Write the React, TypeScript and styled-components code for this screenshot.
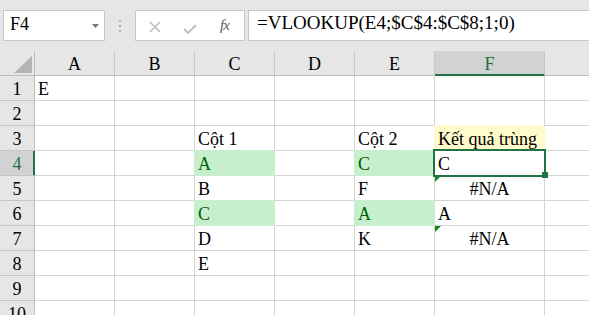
import React from 'react';
import styled, { createGlobalStyle, css } from 'styled-components';

const GREEN = '#217346';
const GOOD_FILL = '#c6efce';
const GOOD_INK = '#006100';
const NOTE_FILL = '#fffbcc';
const SERIF = "'Liberation Serif', 'Times New Roman', serif";

const GlobalStyle = createGlobalStyle`
  html, body {
    margin: 0;
    padding: 0;
    background: #fff;
    overflow: hidden;
  }
  body {
    font-family: ${SERIF};
    color: #000;
  }
`;

const Page = styled.div`
  width: 589px;
  height: 315px;
  overflow: hidden;
  font-family: ${SERIF};
`;

const Toolbar = styled.div`
  height: 51px;
  box-sizing: border-box;
  padding: 10px 0 0 3px;
  background: #e6e6e6;
  display: flex;
  align-items: flex-start;
`;

const NameBox = styled.div`
  width: 102px;
  height: 31px;
  flex-shrink: 0;
  box-sizing: border-box;
  border: 1px solid #c6c6c6;
  background: #fff;
  display: flex;
  justify-content: space-between;
  padding: 0 5px 0 6px;
  font-family: ${SERIF};
  font-size: 18px;
  line-height: 26px;

  & svg {
    align-self: center;
  }
`;

const Grip = styled.div`
  width: 30px;
  height: 31px;
  flex-shrink: 0;
  display: flex;
  flex-direction: column;
  align-items: center;
  justify-content: center;
  gap: 3px;

  & span {
    width: 2px;
    height: 2px;
    background: #b3b3b3;
  }
`;

const FxBox = styled.div`
  width: 110px;
  height: 31px;
  flex-shrink: 0;
  box-sizing: border-box;
  border: 1px solid #c6c6c6;
  background: #fff;
  display: flex;
  align-items: flex-start;
  padding-left: 13px;
`;

const ToolIcon = styled.svg<{ $left: number; $top: number }>`
  margin-left: ${(p) => p.$left}px;
  margin-top: ${(p) => p.$top}px;
  flex-shrink: 0;
`;

const FxLabel = styled.span`
  margin-left: 23px;
  margin-top: 7px;
  font-size: 15px;
  line-height: 15px;
  font-style: italic;
  color: #595959;
  letter-spacing: -1px;
`;

const FormulaBar = styled.div`
  width: 360px;
  height: 31px;
  flex-shrink: 0;
  margin-left: 3px;
  box-sizing: border-box;
  border: 1px solid #c6c6c6;
  background: #fff;
  padding-left: 8px;
  font-size: 19px;
  line-height: 24px;
  white-space: nowrap;
`;

const Sheet = styled.div`
  position: relative;
  display: grid;
  grid-template-columns: 35px repeat(5, 80px) 110px 120px;
  grid-auto-rows: 25px;
  font-family: ${SERIF};
  font-size: 18px;
`;

const headBase = css`
  box-sizing: border-box;
  background: #e6e6e6;
  text-align: center;
  line-height: 22px;
  padding-top: 2px;
`;

const Corner = styled.div`
  ${headBase};
  border-right: 1px solid #bdbdbd;
  border-bottom: 1px solid #bdbdbd;
  display: flex;
  justify-content: flex-end;
  align-items: flex-end;
  padding: 0 2px 2px 0;
`;

const ColHead = styled.div<{ $active?: boolean }>`
  ${headBase};
  border-right: 1px solid #c6c6c6;
  border-bottom: 1px solid ${(p) => (p.$active ? GREEN : '#bdbdbd')};
  ${(p) =>
    p.$active &&
    css`
      background: #d2d2d2;
      color: ${GREEN};
      box-shadow: inset 0 -1px 0 ${GREEN};
    `}
`;

const RowHead = styled.div<{ $active?: boolean }>`
  ${headBase};
  border-right: 1px solid ${(p) => (p.$active ? GREEN : '#bdbdbd')};
  border-bottom: 1px solid #c6c6c6;
  ${(p) =>
    p.$active &&
    css`
      background: #d2d2d2;
      color: ${GREEN};
      box-shadow: inset -1px 0 0 ${GREEN};
    `}
`;

const Cell = styled.div<{ $fill?: string; $ink?: string; $center?: boolean; $flag?: boolean }>`
  position: relative;
  box-sizing: border-box;
  border-right: 1px solid #d4d4d4;
  border-bottom: 1px solid #d4d4d4;
  padding: 2px 3px 0;
  line-height: 22px;
  white-space: nowrap;
  color: ${(p) => p.$ink || '#000'};
  text-align: ${(p) => (p.$center ? 'center' : 'left')};

  ${(p) =>
    p.$fill &&
    css`
      background: ${p.$fill};
      border-color: ${p.$fill};
      box-shadow: -1px -1px 0 ${p.$fill};
    `}

  ${(p) =>
    p.$flag &&
    css`
      &::before {
        content: '';
        position: absolute;
        left: 0;
        top: 0;
        border-top: 6px solid #138a13;
        border-right: 6px solid transparent;
      }
    `}
`;

const Selection = styled.div`
  position: absolute;
  left: 433px;
  top: 98px;
  width: 113px;
  height: 28px;
  box-sizing: border-box;
  border: 2px solid ${GREEN};
  pointer-events: none;

  &::after {
    content: '';
    position: absolute;
    left: 107px;
    top: 21px;
    width: 6px;
    height: 6px;
    background: ${GREEN};
  }
`;

type CellData = { v: string; fill?: string; ink?: string; err?: boolean };

const good = { fill: GOOD_FILL, ink: GOOD_INK };

const data: Record<string, CellData> = {
  A1: { v: 'E' },
  C3: { v: 'Cột 1' },
  E3: { v: 'Cột 2' },
  F3: { v: 'Kết quả trùng', fill: NOTE_FILL },
  C4: { v: 'A', ...good },
  E4: { v: 'C', ...good },
  F4: { v: 'C' },
  C5: { v: 'B' },
  E5: { v: 'F' },
  F5: { v: '#N/A', err: true },
  C6: { v: 'C', ...good },
  E6: { v: 'A', ...good },
  F6: { v: 'A' },
  C7: { v: 'D' },
  E7: { v: 'K' },
  F7: { v: '#N/A', err: true },
  C8: { v: 'E' },
};

// G is only a sliver at the right edge, so its header letter stays out of view
const columns = ['A', 'B', 'C', 'D', 'E', 'F', ''];
const rows = [1, 2, 3, 4, 5, 6, 7, 8, 9, 10];

const ACTIVE_COL = 'F';
const ACTIVE_ROW = 4;

const App = () => {
  return (
    <Page>
      <GlobalStyle />
      <Toolbar>
        <NameBox>
          <span>F4</span>
          <svg width='7' height='4' viewBox='0 0 7 4'>
            <path d='M0 0 H7 L3.5 4 Z' fill='#7a7a7a' />
          </svg>
        </NameBox>
        <Grip>
          <span />
          <span />
          <span />
        </Grip>
        <FxBox>
          <ToolIcon $left={0} $top={10} width='12' height='12' viewBox='0 0 12 12'>
            <path d='M1 1 L11 11 M11 1 L1 11' stroke='#bdbdbd' strokeWidth='1.6' />
          </ToolIcon>
          <ToolIcon $left={22} $top={13} width='14' height='10' viewBox='0 0 14 10'>
            <path d='M1 5 L5 9 L13 1' stroke='#bdbdbd' strokeWidth='1.8' fill='none' />
          </ToolIcon>
          <FxLabel>fx</FxLabel>
        </FxBox>
        <FormulaBar>=VLOOKUP(E4;$C$4:$C$8;1;0)</FormulaBar>
      </Toolbar>

      <Sheet>
        <Corner>
          <svg width='18' height='17' viewBox='0 0 18 17'>
            <path d='M0 17 H18 V0 Z' fill='#b5b5b5' />
          </svg>
        </Corner>
        {columns.map((c, i) => (
          <ColHead key={i} $active={c === ACTIVE_COL}>
            {c}
          </ColHead>
        ))}

        {rows.map((r) => (
          <React.Fragment key={r}>
            <RowHead $active={r === ACTIVE_ROW}>{r}</RowHead>
            {columns.map((c, i) => {
              const cell = c ? data[c + r] : undefined;
              return (
                <Cell
                  key={i}
                  $fill={cell?.fill}
                  $ink={cell?.ink}
                  $center={cell?.err}
                  $flag={cell?.err}
                >
                  {cell?.v}
                </Cell>
              );
            })}
          </React.Fragment>
        ))}

        <Selection />
      </Sheet>
    </Page>
  );
};

export default App;
